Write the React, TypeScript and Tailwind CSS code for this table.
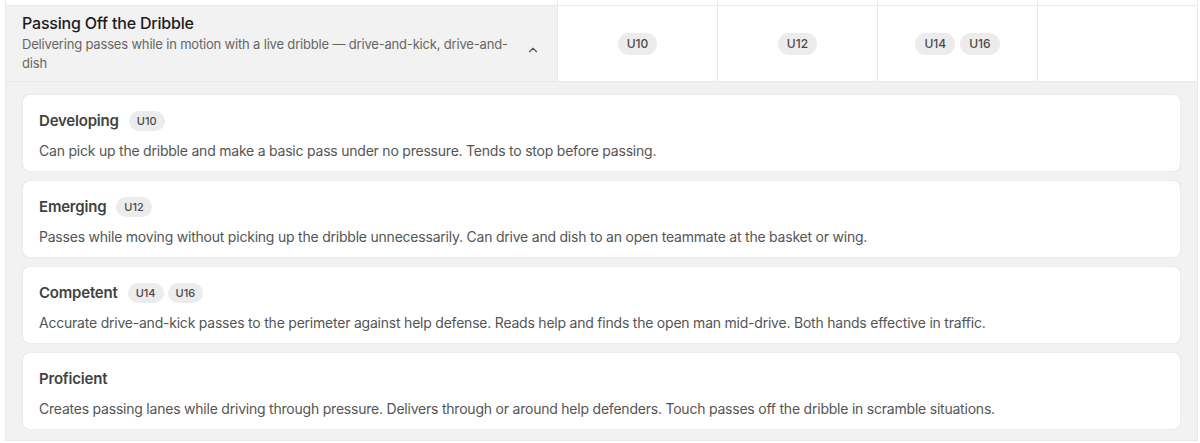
import { ChevronUp } from "lucide-react";

interface Level {
  name: string;
  ages: string[];
  text: string;
}

const levels: Level[] = [
  {
    name: "Developing",
    ages: ["U10"],
    text: "Can pick up the dribble and make a basic pass under no pressure. Tends to stop before passing.",
  },
  {
    name: "Emerging",
    ages: ["U12"],
    text: "Passes while moving without picking up the dribble unnecessarily. Can drive and dish to an open teammate at the basket or wing.",
  },
  {
    name: "Competent",
    ages: ["U14", "U16"],
    text: "Accurate drive-and-kick passes to the perimeter against help defense. Reads help and finds the open man mid-drive. Both hands effective in traffic.",
  },
  {
    name: "Proficient",
    ages: [],
    text: "Creates passing lanes while driving through pressure. Delivers through or around help defenders. Touch passes off the dribble in scramble situations.",
  },
];

const columns = [["U10"], ["U12"], ["U14", "U16"], []];

function AgePill({ label, large }: { label: string; large?: boolean }) {
  return (
    <span
      className={
        large
          ? "inline-flex h-[22px] items-center rounded-full bg-[#ececec] px-[9px] text-[12px] font-medium text-[#4a4a4a]"
          : "inline-flex h-5 items-center rounded-full bg-[#ececec] px-2 text-[11px] font-medium text-[#4a4a4a]"
      }
    >
      {label}
    </span>
  );
}

export default function App() {
  return (
    <div
      className="min-h-[443px] bg-white pl-[5px] pr-[2px]"
      style={{ fontFamily: "Inter, 'Noto Sans', sans-serif" }}
    >
      <div className="border-x border-[#e9e9e9]">
        <div className="grid h-[6px] grid-cols-[1fr_160px_160px_160px_160px] border-b border-[#e9e9e9]">
          <div />
          <div className="border-l border-[#e9e9e9]" />
          <div className="border-l border-[#e9e9e9]" />
          <div className="border-l border-[#e9e9e9]" />
          <div className="border-l border-[#e9e9e9]" />
        </div>

        <div className="grid grid-cols-[1fr_160px_160px_160px_160px] border-b border-[#e9e9e9]">
          <div className="flex items-start bg-[#f2f2f2] pb-2 pl-4 pr-[17px] pt-[6px]">
            <div className="flex-1 pr-[12px]">
              <div className="text-[16px] font-medium leading-[22px] tracking-[-0.2px] text-[#1c1c1c]">
                Passing Off the Dribble
              </div>
              <div className="mt-[1px] text-[13px] leading-[19px] tracking-[-0.18px] text-[#666]">
                Delivering passes while in motion with a live dribble — drive-and-kick, drive-and-dish
              </div>
            </div>
            <ChevronUp size={14} strokeWidth={2} className="mt-[31px] text-[#555]" />
          </div>
          {columns.map((ages, i) => (
            <div
              key={i}
              className="flex items-center justify-center gap-[5px] border-l border-[#e9e9e9] pt-[1px]"
            >
              {ages.map((a) => (
                <AgePill key={a} label={a} large />
              ))}
            </div>
          ))}
        </div>

        <div className="flex flex-col gap-2 border-b border-[#e9e9e9] bg-[#f2f2f2] px-4 pb-[10px] pt-3">
          {levels.map((level) => (
            <div
              key={level.name}
              className="h-[78px] rounded-lg border border-[#ececec] bg-white px-4 pt-[14px] shadow-[0_0_1px_rgba(0,0,0,0.06)]"
            >
              <div className="flex h-6 items-center gap-[4px]">
                <span className="mr-[6px] text-[15px] font-semibold tracking-[-0.2px] text-[#424242]">
                  {level.name}
                </span>
                {level.ages.map((a) => (
                  <AgePill key={a} label={a} />
                ))}
              </div>
              <div className="mt-[6px] text-[14px] leading-6 tracking-[-0.22px] text-[#555]">
                {level.text}
              </div>
            </div>
          ))}
        </div>
      </div>
    </div>
  );
}
